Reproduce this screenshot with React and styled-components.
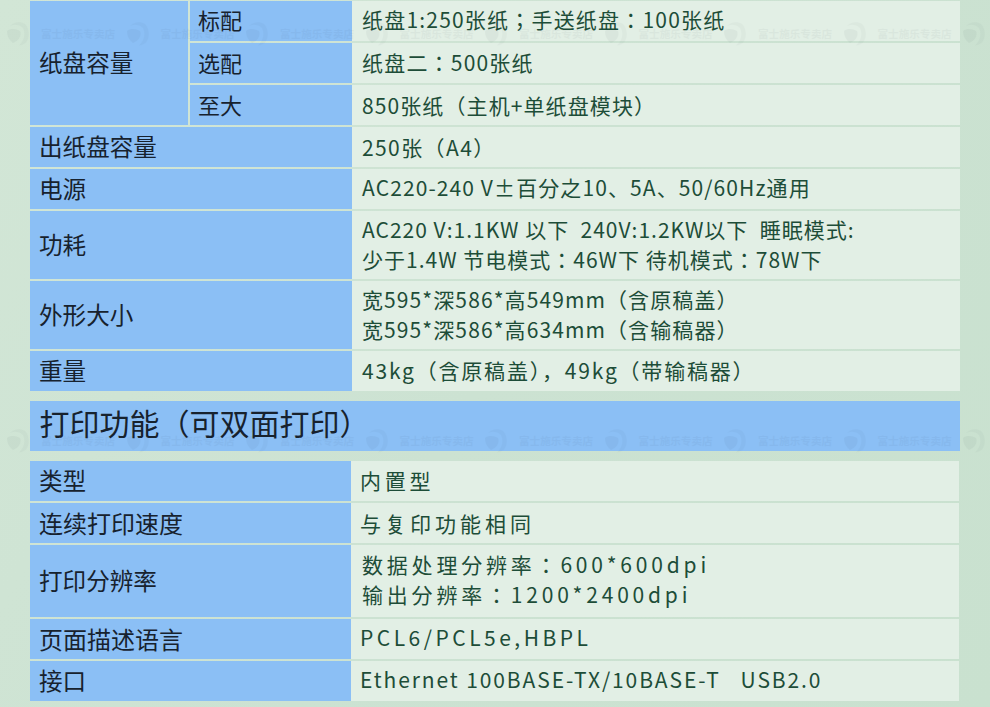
import React from "react";
import styled, { createGlobalStyle } from "styled-components";

const Global = createGlobalStyle`
  html, body { margin: 0; padding: 0; }
  body { background: #cde3d2; font-family: "Noto Sans CJK SC", "Noto Sans", sans-serif; }
`;

const Page = styled.div`
  position: relative;
  width: 990px;
  height: 707px;
  overflow: hidden;
  box-sizing: border-box;
  padding: 1px 30px 0;
  display: flex;
  flex-direction: column;
  background: linear-gradient(120deg, #d2e6d6 0%, #cce2d2 50%, #c9e1cf 100%);
`;

const Table = styled.div`
  display: grid;
  grid-template-columns: ${(p) => p.$cols};
  grid-template-rows: ${(p) => p.$rows};
  row-gap: 2px;
`;

const Label = styled.div`
  display: flex;
  align-items: center;
  grid-column: span ${(p) => p.$span || 1};
  grid-row: span ${(p) => p.$rowSpan || 1};
  padding-left: 9px;
  background: #8bbff5;
  color: #17222e;
  font-size: ${(p) => p.$size || 23.6}px;
  line-height: 1;
  white-space: nowrap;
`;

const SubLabel = styled.div`
  display: flex;
  align-items: center;
  margin-left: 2px;
  padding: 0 0 ${(p) => p.$lift ?? 2}px 8px;
  background: #8bbff5;
  color: #17222e;
  font-size: 22px;
  line-height: 1;
`;

const Value = styled.div`
  display: flex;
  flex-direction: column;
  justify-content: center;
  padding: 0 0 ${(p) => p.$lift ?? 3}px ${(p) => p.$pad ?? 10}px;
  background: #e2efe5;
  color: #1d4d38;
  font-family: "Noto Sans CJK JP", "Noto Sans CJK SC", sans-serif;
  font-size: 21px;
  line-height: 30px;
  letter-spacing: ${(p) => p.$ls ?? 1.1}px;
  white-space: pre;
`;

const Heading = styled.h2`
  margin: 10px 0;
  height: 50px;
  display: flex;
  align-items: center;
  padding: 0 0 8px 9.5px;
  box-sizing: border-box;
  background: #8bbff5;
  color: #17222e;
  font-size: 30px;
  font-weight: 400;
  line-height: 1;
`;

const Watermarks = styled.div`
  position: absolute;
  inset: 0;
  pointer-events: none;
`;

const WatermarkRow = styled.div`
  position: absolute;
  left: 5px;
  top: ${(p) => p.$top}px;
  display: flex;
  opacity: 0.04;
`;

const Mark = styled.div`
  flex: none;
  width: 119.5px;
  height: 26px;
  display: flex;
  align-items: center;
  gap: 11px;
  color: #1c2c3c;
  font-size: 10.6px;
  font-weight: 700;
  white-space: nowrap;
`;

const Logo = () => (
  <svg width="25" height="25" viewBox="0 0 25 25" fill="none">
    <path d="M2 10 C6 7 11 8 15 10 C17 15 13 20 8 22 C4 19 2 15 2 10Z" fill="#1c2c3c" />
    <path d="M5 5 C9 1 15 0 20 3 C24 7 25 15 22 20 C20 23 17 24 14 24.5 C19 20 21 13 18 7 C14 3 9 3 5 5Z" fill="#1c2c3c" opacity="0.7" />
  </svg>
);

const WatermarkStrip = ({ top }) => (
  <WatermarkRow $top={top}>
    {Array.from({ length: 9 }, (_, i) => (
      <Mark key={i}>
        <Logo />
        <span>富士施乐专卖店</span>
      </Mark>
    ))}
  </WatermarkRow>
);

export default function App() {
  return (
    <Page>
      <Global />
      <Table $cols="158px 164px 608px" $rows="repeat(5, 40px) 68px 68px 40px">
        <Label $rowSpan={3}>纸盘容量</Label>
        <SubLabel $lift={4}>标配</SubLabel>
        <Value $ls={1.2} $lift={5}>纸盘1:250张纸；手送纸盘：100张纸</Value>
        <SubLabel>选配</SubLabel>
        <Value $ls={1.2}>纸盘二：500张纸</Value>
        <SubLabel $lift={3}>至大</SubLabel>
        <Value $lift={1}>850张纸（主机+单纸盘模块）</Value>
        <Label $span={2}>出纸盘容量</Label>
        <Value $ls={1.4} $lift={1}>250张（A4）</Value>
        <Label $span={2}>电源</Label>
        <Value $lift={5}>AC220-240 V±百分之10、5A、50/60Hz通用</Value>
        <Label $span={2}>功耗</Label>
        <Value $ls={1}>
          <span>AC220 V:1.1KW 以下  240V:1.2KW以下  睡眠模式:</span>
          <span>少于1.4W 节电模式：46W下 待机模式：78W下</span>
        </Value>
        <Label $span={2}>外形大小</Label>
        <Value>
          <span>宽595*深586*高549mm（含原稿盖）</span>
          <span>宽595*深586*高634mm（含输稿器）</span>
        </Value>
        <Label $span={2}>重量</Label>
        <Value $ls={1.8}>43kg（含原稿盖），49kg（带输稿器）</Value>
      </Table>
      <Heading>打印功能（可双面打印）</Heading>
      <Table $cols="321px 608px" $rows="40px 40px 72px 40px 40px">
        <Label>类型</Label>
        <Value $ls={3.8} $pad={9}>内置型</Value>
        <Label $size={24}>连续打印速度</Label>
        <Value $ls={4} $lift={1} $pad={9}>与复印功能相同</Value>
        <Label>打印分辨率</Label>
        <Value $ls={3.8} $pad={11} $lift={5}>
          <span>数据处理分辨率：600*600dpi</span>
          <span>输出分辨率：1200*2400dpi</span>
        </Value>
        <Label $size={24}>页面描述语言</Label>
        <Value $ls={3.5} $lift={5} $pad={9}>PCL6/PCL5e,HBPL</Value>
        <Label>接口</Label>
        <Value $ls={1.9} $lift={5} $pad={9}>Ethernet 100BASE-TX/10BASE-T   USB2.0</Value>
      </Table>
      <Watermarks>
        <WatermarkStrip top={20} />
        <WatermarkStrip top={427} />
      </Watermarks>
    </Page>
  );
}
